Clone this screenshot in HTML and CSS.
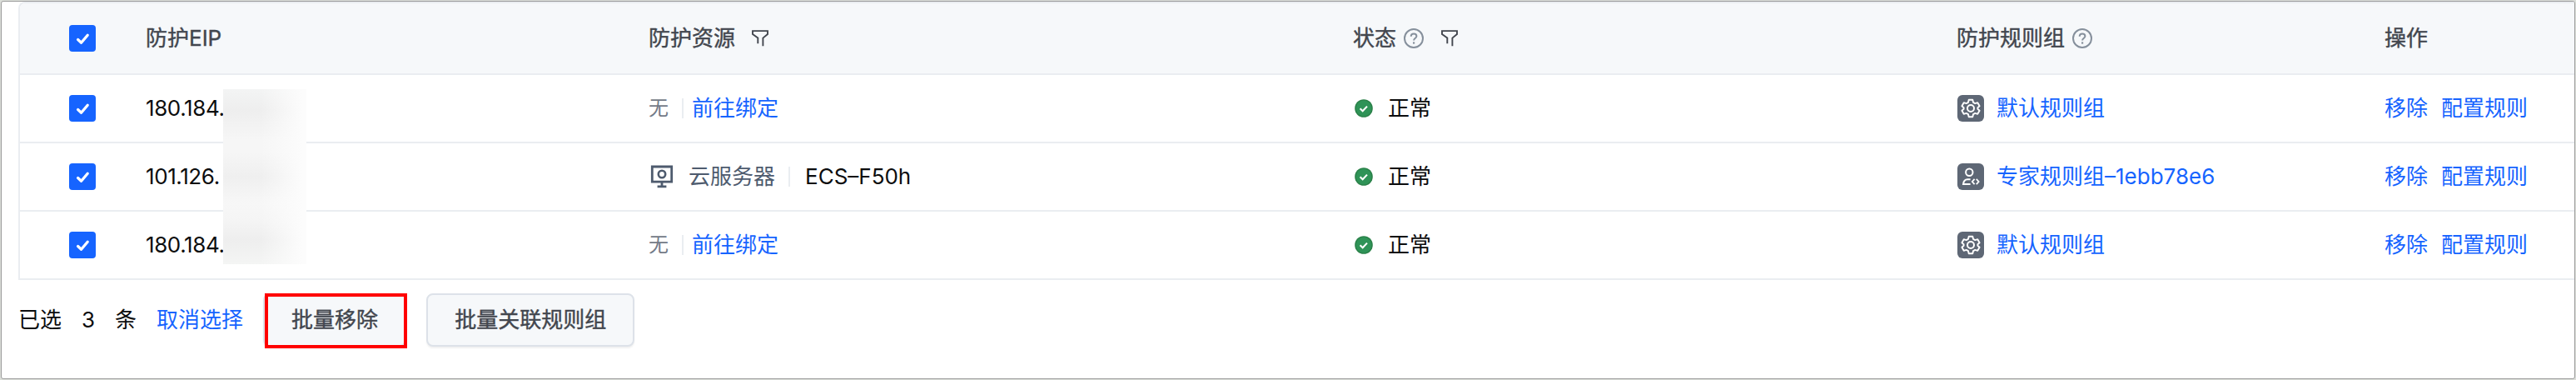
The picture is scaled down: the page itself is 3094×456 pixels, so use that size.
FILE: index.html
```html
<!DOCTYPE html>
<html lang="zh-CN">
<head>
<meta charset="utf-8">
<title>防护EIP</title>
<link rel="stylesheet" href="styles.css">
</head>
<body>
<svg class="defs" width="0" height="0" aria-hidden="true">
  <symbol id="check" viewBox="0 0 32 32"><path d="M10.6 17.6l4 3.6 7.6-9" fill="none" stroke="#fff" stroke-width="3.3" stroke-linecap="round" stroke-linejoin="round"/></symbol>
  <symbol id="filter" viewBox="0 0 22 22"><path d="M8.3 17.3V10.6L2 6V2.1h18V6l-5.6 4.6v9.6" fill="none" stroke="#42464e" stroke-width="1.9"/></symbol>
  <symbol id="help" viewBox="0 0 24 24"><circle cx="12" cy="12" r="11" fill="none" stroke="#86909c" stroke-width="2"/><path d="M8.7 9.8c0-2 1.3-3.3 3.4-3.3s3.3 1.2 3.3 2.9c0 2.2-3.3 2.4-3.3 5.2" fill="none" stroke="#86909c" stroke-width="2"/><rect x="11" y="16.4" width="2.2" height="2.2" fill="#86909c"/></symbol>
  <symbol id="ok" viewBox="0 0 22 22"><circle cx="11" cy="11" r="10.8" fill="#2a8048"/><circle cx="11" cy="11" r="9.4" fill="#2f9357"/><path d="M6.6 11.2l3.1 3 5.3-5.6" fill="none" stroke="#fff" stroke-width="2.1"/></symbol>
  <symbol id="server" viewBox="0 0 28 28"><path d="M2.3 2h23.4v18.2H2.3zM14 20v6M8.6 25.8h10.8" fill="none" stroke="#4e5b6e" stroke-width="2.8"/><circle cx="14" cy="11" r="4.2" fill="none" stroke="#4e5b6e" stroke-width="2.6"/></symbol>
  <symbol id="gear" viewBox="0 0 32 32"><rect width="32" height="32" rx="6" fill="#5e6775"/><path d="M13.7 5.8h4.6l.7 3 2.3 1.3 3-.9 2.3 4-2.2 2v1.6l2.2 2-2.3 4-3-.9-2.3 1.3-.7 3h-4.6l-.7-3-2.3-1.3-3 .9-2.3-4 2.2-2v-1.6l-2.2-2 2.3-4 3 .9 2.3-1.3z" fill="none" stroke="#fff" stroke-width="1.9" stroke-linejoin="round"/><circle cx="16" cy="16" r="4" fill="none" stroke="#fff" stroke-width="2"/></symbol>
  <symbol id="expert" viewBox="0 0 32 32"><rect width="32" height="32" rx="6" fill="#5e6775"/><circle cx="14.3" cy="10.7" r="4.2" fill="none" stroke="#fff" stroke-width="2"/><path d="M15.6 19.3h-3.4c-3 0-4.8 2.4-5.2 5.7h8.6" fill="none" stroke="#fff" stroke-width="2"/><path d="M20.6 18.9l-2.8 3.1 2.8 3.1M22.8 18.9l2.8 3.1-2.8 3.1" fill="none" stroke="#fff" stroke-width="1.8"/></symbol>
</svg>
<main class="frame">
  <section class="table">
    <div class="row head">
      <div class="cell pick"><span class="box"><svg><use href="#check"/></svg></span></div>
      <div class="cell">防护EIP</div>
      <div class="cell">防护资源<svg class="filter"><use href="#filter"/></svg></div>
      <div class="cell">状态<svg class="help"><use href="#help"/></svg><svg class="filter"><use href="#filter"/></svg></div>
      <div class="cell">防护规则组<svg class="help"><use href="#help"/></svg></div>
      <div class="cell">操作</div>
    </div>
    <div class="row">
      <div class="cell pick"><span class="box"><svg><use href="#check"/></svg></span></div>
      <div class="cell ip">180.184.<span class="mask"></span></div>
      <div class="cell"><span class="none">无</span><i class="bar"></i><a class="link">前往绑定</a></div>
      <div class="cell"><svg class="ok"><use href="#ok"/></svg>正常</div>
      <div class="cell"><svg class="badge"><use href="#gear"/></svg><a class="link">默认规则组</a></div>
      <div class="cell actions"><a class="link">移除</a><a class="link">配置规则</a></div>
    </div>
    <div class="row">
      <div class="cell pick"><span class="box"><svg><use href="#check"/></svg></span></div>
      <div class="cell ip">101.126.</div>
      <div class="cell"><svg class="server"><use href="#server"/></svg><span class="kind">云服务器</span><i class="bar wide"></i><span class="name">ECS–F50h</span></div>
      <div class="cell"><svg class="ok"><use href="#ok"/></svg>正常</div>
      <div class="cell"><svg class="badge"><use href="#expert"/></svg><a class="link">专家规则组–1ebb78e6</a></div>
      <div class="cell actions"><a class="link">移除</a><a class="link">配置规则</a></div>
    </div>
    <div class="row">
      <div class="cell pick"><span class="box"><svg><use href="#check"/></svg></span></div>
      <div class="cell ip">180.184.</div>
      <div class="cell"><span class="none">无</span><i class="bar"></i><a class="link">前往绑定</a></div>
      <div class="cell"><svg class="ok"><use href="#ok"/></svg>正常</div>
      <div class="cell"><svg class="badge"><use href="#gear"/></svg><a class="link">默认规则组</a></div>
      <div class="cell actions"><a class="link">移除</a><a class="link">配置规则</a></div>
    </div>
  </section>
  <footer class="footer">
    <span>已选</span><span class="count">3</span><span class="unit">条</span><a class="link cancel">取消选择</a>
    <button class="btn marked">批量移除</button>
    <button class="btn">批量关联规则组</button>
  </footer>
</main>
</body>
</html>
```
FILE: styles.css
```css
*, *::after { box-sizing: border-box; }
body {
  margin: 0;
  padding: 1px;
  height: 456px;
  overflow: hidden;
  background: #dcdfda;
  font-family: Inter, "Noto Sans CJK SC", sans-serif;
  font-size: 26px;
  font-weight: 400;
  line-height: 40px;
  color: #0c0d0e;
}
.defs { position: absolute; }
svg { display: block; flex: none; }
.frame {
  height: 454px;
  border: 1px solid #9c9c9c;
  border-radius: 3px;
  background: #fff;
  padding-left: 20px;
  overflow: hidden;
}
.table {
  border: 2px solid #eaedf1;
  border-right: 0;
  border-bottom: 0;
  border-top-left-radius: 8px;
}
.row {
  display: grid;
  grid-template-columns: 151px 604px 846px 725px 514px 1fr;
  height: 82px;
  border-bottom: 2px solid #eaedf1;
}
.head {
  height: 86px;
  background: #f6f8fa;
  border-top-left-radius: 6px;
  color: #42464e;
  -webkit-text-stroke: 0.4px #42464e;
}
.cell { display: flex; align-items: center; white-space: nowrap; }
.pick { padding-left: 59px; }
.box { width: 32px; height: 32px; border-radius: 4px; background: #1664ff; }
.box svg { width: 32px; height: 32px; }
.filter { width: 22px; height: 22px; margin-left: 19px; }
.help { width: 24px; height: 24px; margin-left: 9px; }
.help + .filter { margin-left: 20px; }
.ip { position: relative; letter-spacing: -0.4px; }
.mask {
  position: absolute;
  z-index: 1;
  left: 93px;
  top: 17px;
  width: 100px;
  height: 210px;
  background:
    linear-gradient(90deg, rgba(252,252,252,0) 45%, #fcfcfc 95%),
    linear-gradient(180deg, #f3f4f4 0%, #eeeeee 12%, #f6f6f6 29%, #f6f6f6 36%, #efefef 50%, #f7f7f7 65%, #f5f5f5 74%, #eeeeee 86%, #f4f5f4 100%);
}
.none { color: #737a87; font-size: 24px; }
.bar { width: 2px; height: 24px; margin: 0 10px 0 16px; background: #eaedf1; }
.bar.wide { margin: 0 18px 0 16px; }
.kind { color: #4e5b6e; margin-left: 18px; }
.link { color: #1664ff; }
.server { width: 28px; height: 28px; margin-left: 2px; }
.ok { width: 22px; height: 22px; margin: 0 18px 0 2px; }
.badge { width: 32px; height: 32px; margin: 0 15px 0 1px; }
.actions { gap: 16px; }
.footer { display: flex; align-items: center; height: 64px; margin-top: 16px; }
.count { margin-left: 24px; }
.unit { margin-left: 24px; }
.cancel { margin: 0 24px 0 24px; }
.btn {
  position: relative;
  height: 64px;
  margin: 0 24px 0 0;
  padding: 0 32px;
  border: 2px solid #dde2e9;
  border-radius: 8px;
  background: #f6f8fa;
  box-shadow: 0 2px 2px rgba(0, 0, 0, 0.06);
  font: inherit;
  color: #42464e;
  -webkit-text-stroke: 0.4px #42464e;
  white-space: nowrap;
}
.marked::after {
  content: "";
  position: absolute;
  left: 0;
  top: -2px;
  width: 171px;
  height: 66px;
  border: 4px solid #f00;
}
```
